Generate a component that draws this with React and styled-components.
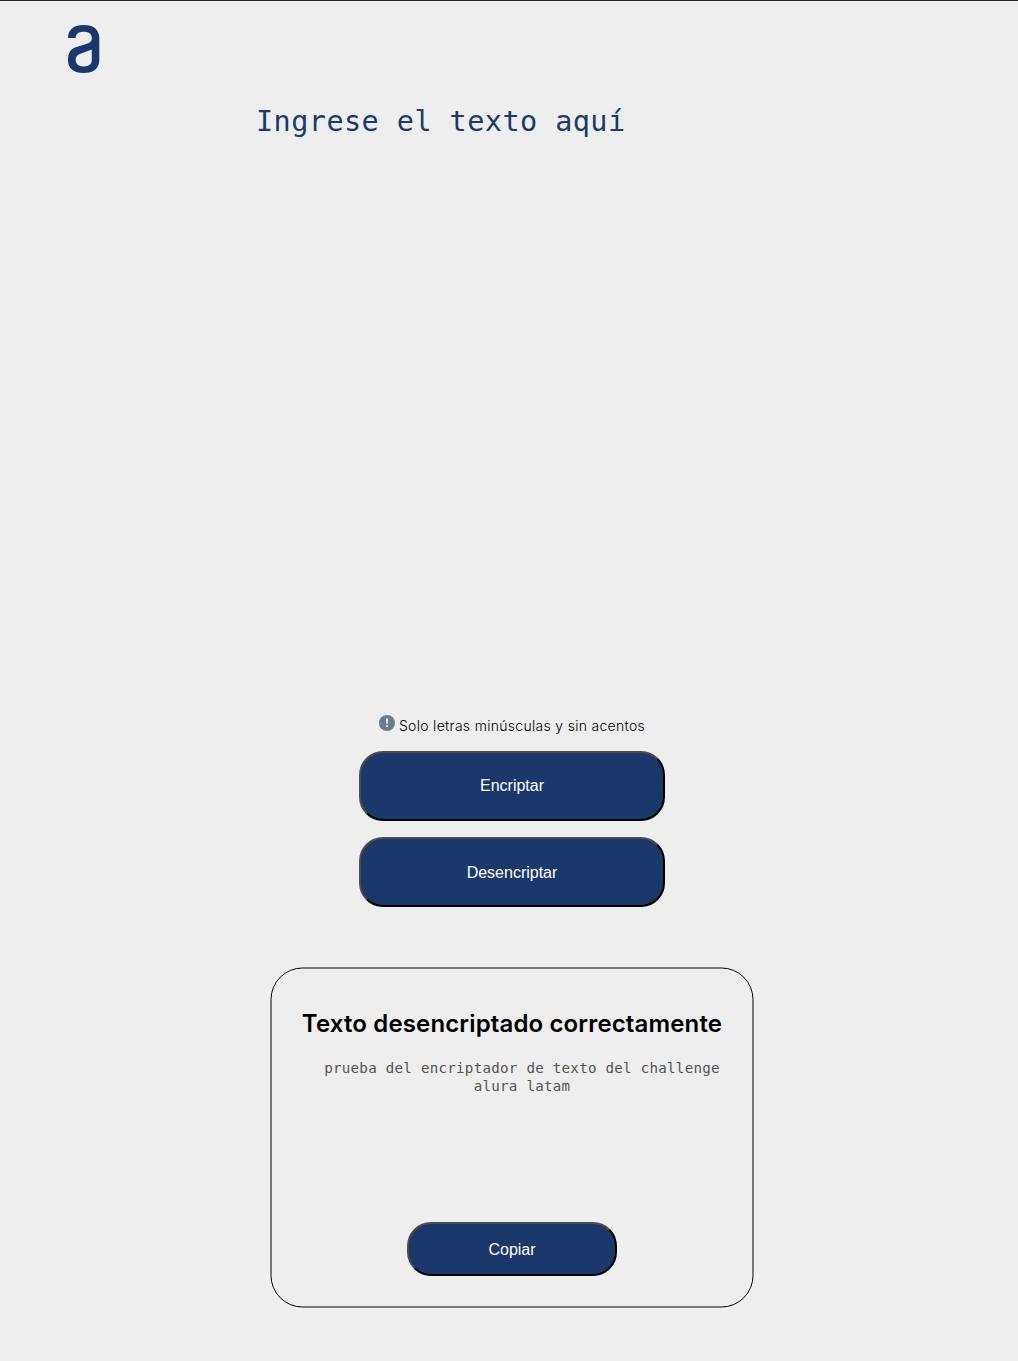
import React from "react";
import styled, { createGlobalStyle } from "styled-components";

const GlobalStyle = createGlobalStyle`
  * { box-sizing: border-box; }
  body { margin: 0; background: #eeeeee; }
`;

const Page = styled.main`
  display: flex;
  flex-direction: column;
  height: 1361px;
  overflow: hidden;
  border-top: 1px solid #2b2a2e;
  background: #eeeeee;
  font-family: Inter, sans-serif;
`;

const Header = styled.header`
  height: 101px;
  padding: 24px 0 0 67px;
  svg { display: block; }
`;

const Editor = styled.section`
  display: flex;
  flex-direction: column;
  align-items: center;
  padding-left: 6px;
`;

const TextInput = styled.textarea`
  width: 512px;
  height: 604px;
  padding: 1px 2px 0 0;
  border: 0;
  outline: 0;
  resize: none;
  background: transparent;
  color: #1b3a6d;
  font: 28.5px/38px "DejaVu Sans Mono", monospace;
  letter-spacing: 0.44px;
  &::placeholder { color: #1b3a6d; opacity: 1; }
`;

const Hint = styled.p`
  display: flex;
  gap: 4px;
  height: 45px;
  margin: 0;
  padding-top: 9px;
  color: #000;
  font-size: 14px;
  font-weight: 300;
  line-height: 22px;
  letter-spacing: 0.3px;
`;

const Button = styled.button`
  display: block;
  width: ${({ $small }) => ($small ? 210 : 306)}px;
  height: ${({ $small }) => ($small ? 54 : 70)}px;
  padding: ${({ $drop }) => ($drop ? 2 : 0)}px 0 0;
  border: 2px solid;
  border-color: #4c4c4c #000 #000 #4c4c4c;
  border-radius: 24px;
  background: #1b386d;
  color: #fff;
  font: 16px "Liberation Sans", Arial, sans-serif;
`;

const Actions = styled.div`
  display: flex;
  flex-direction: column;
  gap: 16px;
`;

const Result = styled.section`
  position: relative;
  display: flex;
  flex-direction: column;
  align-items: center;
  width: 484px;
  height: 341px;
  margin: 60px 0 0 270px;
  padding-top: 41px;
  &::before {
    content: "";
    position: absolute;
    inset: 0 1px 1px 0;
    border: 1px solid #000;
    border-radius: 32px;
    transform: translate(0.5px, 0.5px);
    pointer-events: none;
  }
`;

const Title = styled.h1`
  margin: 0;
  color: #000;
  font-size: 24px;
  font-weight: 600;
  line-height: 32px;
  letter-spacing: 0.14px;
  white-space: nowrap;
`;

const Message = styled.p`
  width: 420px;
  height: 163px;
  margin: 19px 0 0 20px;
  color: #545454;
  text-align: center;
  font: 14.2px/18px "DejaVu Sans Mono", monospace;
  letter-spacing: 0.25px;
`;

function Logo() {
  return (
    <svg width="34" height="49" viewBox="0 0 34 49">
      <path
        fill="#1b386d"
        fillRule="evenodd"
        d="M1 12.9C1 4.5 7 0 16.7 0C26.5 0 32.3 4.5 32.3 13V35C32.3 43.5 26.5 48 16.7 48C7 48 1 43.5 1 35.5C1 28 3.5 24 9.5 22.1L20 18.7C23.5 17.5 24.8 16 24.8 13C24.8 8.8 21.8 6.8 16.7 6.8C11.8 6.8 8.7 8.8 8.7 12.9ZM24.8 24.5L14 28.4C10.2 29.8 8.7 31.5 8.7 35C8.7 39.4 11.7 41.4 16.7 41.4C21.8 41.4 24.8 39.4 24.8 35Z"
      />
    </svg>
  );
}

function AlertIcon() {
  return (
    <svg width="16" height="16" viewBox="0 0 16 16">
      <circle cx="8" cy="8" r="8" fill="#6b7c8b" />
      <path d="M6.9 3.6h2.2l-.3 5.2H7.2z" fill="#eee" />
      <circle cx="8" cy="11.1" r="1.15" fill="#eee" />
    </svg>
  );
}

export default function App() {
  return (
    <Page>
      <GlobalStyle />
      <Header><Logo /></Header>
      <Editor>
        <TextInput placeholder="Ingrese el texto aquí" />
        <Hint><AlertIcon /><span>Solo letras minúsculas y sin acentos</span></Hint>
        <Actions>
          <Button>Encriptar</Button>
          <Button $drop>Desencriptar</Button>
        </Actions>
      </Editor>
      <Result>
        <Title>Texto desencriptado correctamente</Title>
        <Message>prueba del encriptador de texto del challenge alura latam</Message>
        <Button $small $drop>Copiar</Button>
      </Result>
    </Page>
  );
}
